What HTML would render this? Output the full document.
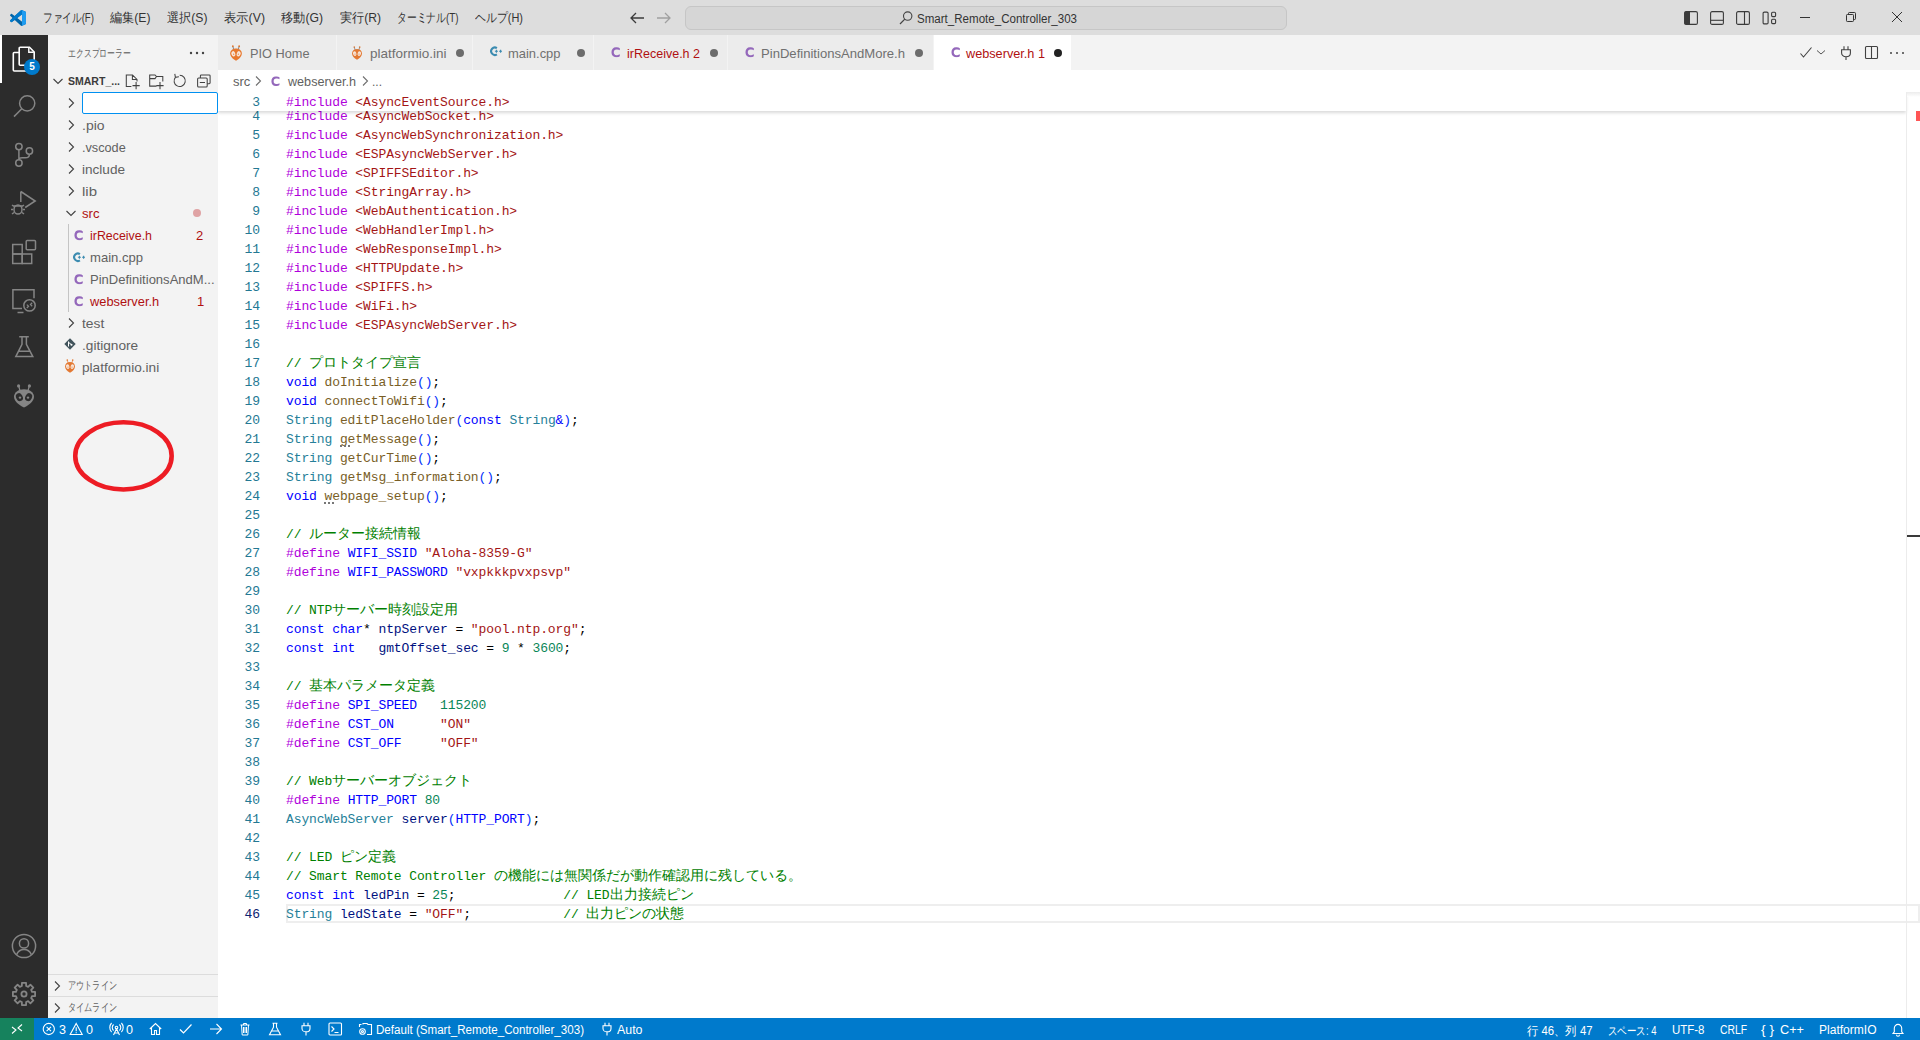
<!DOCTYPE html>
<html><head><meta charset="utf-8">
<style>
*{box-sizing:border-box;margin:0;padding:0}
html,body{width:1920px;height:1040px;overflow:hidden;background:#fff;font-family:"Liberation Sans",sans-serif;}
.abs{position:absolute}
#title{position:absolute;left:0;top:0;width:1920px;height:35px;background:#dddddd}
.menu{position:absolute;top:9px;font-size:13px;color:#333;white-space:nowrap}
#cc{position:absolute;left:685px;top:6px;width:602px;height:24px;border:1px solid #c6c6c6;border-radius:6px;background:#d6d6d6}
#act{position:absolute;left:0;top:35px;width:48px;height:983px;background:#2c2c2c}
#side{position:absolute;left:48px;top:35px;width:170px;height:983px;background:#f3f3f3}
#tabs{position:absolute;left:218px;top:35px;width:1702px;height:35px;background:#f3f3f3}
.tab{position:absolute;top:0;height:35px;background:#ececec;border-right:1px solid #f3f3f3;font-size:13px;color:#707070;white-space:nowrap}
.tab.active{background:#fff;color:#333}
.tab .lbl{position:absolute;top:11px}
.dot{position:absolute;top:14px;width:8px;height:8px;border-radius:50%;background:#6c6c6c}
#bc{position:absolute;left:218px;top:70px;width:1702px;height:22px;background:#fff;font-size:13px;color:#616161}
#editor{position:absolute;left:218px;top:92px;width:1702px;height:926px;background:#fff;overflow:hidden}
.ln{position:absolute;left:0;width:42px;text-align:right;font-family:"Liberation Mono",monospace;font-size:13px;line-height:19px;height:19px;color:#237893;padding-top:1px}
.ln.cur{color:#0b216f}
.cl{position:absolute;left:68px;white-space:pre;font-family:"Liberation Mono",monospace;font-size:13px;letter-spacing:-0.1px;line-height:19px;height:19px;color:#000;padding-top:1px}
.kw{color:#af00db}.str{color:#a31515}.cm{color:#008000}.cmj{color:#008000;letter-spacing:0;font-size:14px}.ty{color:#267f99}.fn{color:#795e26}.bl{color:#0000ff}.var{color:#001080}.num{color:#098658}.br{color:#0431fa}.op{color:#000}
#status{position:absolute;left:0;top:1018px;width:1920px;height:22px;background:#007acc;color:#fff;font-size:12px;white-space:nowrap}
.si{position:absolute;top:4.5px}
.tree{position:absolute;font-size:13px;color:#616161;white-space:nowrap;line-height:22px;height:22px;padding-top:1px}
</style></head><body>
<svg width="0" height="0" style="position:absolute">
<defs>
<symbol id="alien" viewBox="0 0 24 24">
 <path d="M12 5.2C6 5.2 2 8.6 2 12.8c0 4 4.4 8.4 10 10.7c5.6-2.3 10-6.7 10-10.7C22 8.6 18 5.2 12 5.2z"></path>
 <circle cx="6.6" cy="1.9" r="1.6"></circle><circle cx="17.4" cy="1.9" r="1.6"></circle>
 <path d="M6.9 2.5L7.8 6.2M17.1 2.5L16.2 6.2" stroke-width="1.3" stroke="currentColor"></path>
</symbol>
<symbol id="alieneyes" viewBox="0 0 24 24">
 <ellipse cx="7.4" cy="13.2" rx="3.3" ry="4.1" transform="rotate(-28 7.4 13.2)"></ellipse><ellipse cx="16.6" cy="13.2" rx="3.3" ry="4.1" transform="rotate(28 16.6 13.2)"></ellipse>
</symbol>
<symbol id="cicon" viewBox="0 0 9 10"><path d="M8.3 1.2C7.6.6 6.6.3 5.4.3H4.7C2 .3.4 2.2.4 5s1.6 4.7 4.3 4.7h.7c1.2 0 2.2-.3 2.9-.9V6.9c-.6.5-1.4.8-2.4.8H5c-1.5 0-2.4-1-2.4-2.7S3.5 2.3 5 2.3h.9c1 0 1.8.3 2.4.8z"></path></symbol>
<symbol id="chevr" viewBox="0 0 16 16"><path d="M6 3.5l4.5 4.5L6 12.5" fill="none" stroke="currentColor" stroke-width="1.1"></path></symbol>
<symbol id="chevd" viewBox="0 0 16 16"><path d="M3.5 6l4.5 4.5L12.5 6" fill="none" stroke="currentColor" stroke-width="1.1"></path></symbol>
<symbol id="cppicon" viewBox="0 0 12 11"><path d="M6.9 2.1A3.7 3.7 0 1 0 6.9 8.3" fill="none" stroke="currentColor" stroke-width="2.1"></path><path d="M4.9 5.2h3M6.4 3.7v3M9.1 5.2h3M10.6 3.7v3" stroke="currentColor" stroke-width="1.1"></path></symbol>
</defs></svg>
<div id="title">
  <div class="menu" style="left: 43px; display: inline-block; transform-origin: 0px 50%; transform: scaleX(0.7433);">ファイル(F)</div>
  <div class="menu" style="left: 110px; display: inline-block; transform-origin: 0px 50%; transform: scaleX(0.9344);">編集(E)</div>
  <div class="menu" style="left: 166.5px; display: inline-block; transform-origin: 0px 50%; transform: scaleX(0.9344);">選択(S)</div>
  <div class="menu" style="left: 223.5px; display: inline-block; transform-origin: 0px 50%; transform: scaleX(0.9459);">表示(V)</div>
  <div class="menu" style="left: 281px; display: inline-block; transform-origin: 0px 50%; transform: scaleX(0.9379);">移動(G)</div>
  <div class="menu" style="left: 340px; display: inline-block; transform-origin: 0px 50%; transform: scaleX(0.9308);">実行(R)</div>
  <div class="menu" style="left: 397px; display: inline-block; transform-origin: 0px 50%; transform: scaleX(0.7536);">ターミナル(T)</div>
  <div class="menu" style="left: 475px; display: inline-block; transform-origin: 0px 50%; transform: scaleX(0.8414);">ヘルプ(H)</div>
  <svg class="abs" style="left:10px;top:10px" width="16" height="16" viewBox="0 0 100 100"><path fill="#0065a9" fill-rule="evenodd" d="M70.9 99.3c1.6.6 3.4.6 5-.2l20.6-9.9c2.1-1 3.5-3.2 3.5-5.6V16.4c0-2.4-1.4-4.6-3.5-5.6L75.9.9c-2.1-1-4.5-.8-6.4.6-.3.2-.5.4-.7.6L29.4 38 12.2 25c-1.6-1.2-3.8-1.1-5.3.2l-5.5 5c-1.8 1.7-1.8 4.5 0 6.2L16.2 50 1.4 63.6c-1.8 1.7-1.8 4.5 0 6.2l5.5 5c1.5 1.4 3.7 1.5 5.3.2l17.2-13L68.8 97.9c.6.6 1.3 1.1 2.1 1.4zM75.9 27.3L45 50l30.9 22.7z"></path><path fill="#007acc" d="M96.5 10.8L75.9.9c-2.4-1.2-5.2-.7-7.1 1.2L1.4 63.6c-1.8 1.7-1.8 4.5 0 6.2l5.5 5c1.5 1.4 3.7 1.5 5.3.2L93.3 13.4c2.7-2.1 6.7-.1 6.7 3.3v-.2c0-2.4-1.4-4.6-3.5-5.7z"></path><path fill="#1f9cf0" d="M75.9 99.1c-2.4 1.2-5.2.7-7.1-1.2 2.3 2.3 6.3.7 6.3-2.6V4.6c0-3.3-4-4.9-6.3-2.6 1.9-1.9 4.7-2.4 7.1-1.2l20.6 9.9c2.2 1 3.5 3.2 3.5 5.6v67.2c0 2.4-1.4 4.6-3.5 5.6z"></path></svg>
  <svg class="abs" style="left:628px;top:10px" width="18" height="16" viewBox="0 0 18 16"><path d="M16 8H3M8 3L3 8l5 5" fill="none" stroke="#3b3b3b" stroke-width="1.3"></path></svg>
  <svg class="abs" style="left:655px;top:10px" width="18" height="16" viewBox="0 0 18 16"><path d="M2 8h13M10 3l5 5-5 5" fill="none" stroke="#a0a0a0" stroke-width="1.3"></path></svg>
  <svg class="abs" style="left:1684px;top:11px" width="14" height="14" viewBox="0 0 14 14"><rect x="0.6" y="0.6" width="12.8" height="12.8" rx="1.5" fill="none" stroke="#3b3b3b" stroke-width="1.1"></rect><rect x="0.6" y="0.6" width="5.4" height="12.8" fill="#3b3b3b"></rect></svg>
  <svg class="abs" style="left:1710px;top:11px" width="14" height="14" viewBox="0 0 14 14"><rect x="0.6" y="0.6" width="12.8" height="12.8" rx="1.5" fill="none" stroke="#3b3b3b" stroke-width="1.1"></rect><path d="M0.6 9.3h12.8" stroke="#3b3b3b" stroke-width="1.1"></path></svg>
  <svg class="abs" style="left:1736px;top:11px" width="14" height="14" viewBox="0 0 14 14"><rect x="0.6" y="0.6" width="12.8" height="12.8" rx="1.5" fill="none" stroke="#3b3b3b" stroke-width="1.1"></rect><path d="M8.5 0.6v12.8" stroke="#3b3b3b" stroke-width="1.1"></path></svg>
  <svg class="abs" style="left:1762px;top:11px" width="15" height="14" viewBox="0 0 15 14"><rect x="1.1" y="1.1" width="5" height="11.8" rx="1.2" fill="none" stroke="#3b3b3b" stroke-width="1.1"></rect><rect x="9.6" y="1.3" width="4" height="4.3" rx="1" fill="none" stroke="#3b3b3b" stroke-width="1.1"></rect><rect x="9.6" y="8.3" width="4" height="4.3" rx="1" fill="none" stroke="#3b3b3b" stroke-width="1.1"></rect></svg>
  <div class="abs" style="left:1800px;top:17px;width:10px;height:1px;background:#333"></div>
  <svg class="abs" style="left:1845px;top:11px" width="12" height="12" viewBox="0 0 12 12"><rect x="1.5" y="3.5" width="7" height="7" rx="0.8" fill="none" stroke="#333" stroke-width="1"></rect><path d="M3.5 3.5V2.3c0-.5.3-.8.8-.8h5.4c.5 0 .8.3.8.8v5.4c0 .5-.3.8-.8.8H8.5" fill="none" stroke="#333" stroke-width="1"></path></svg>
  <svg class="abs" style="left:1891px;top:11px" width="12" height="12" viewBox="0 0 12 12"><path d="M1 1l10 10M11 1L1 11" stroke="#333" stroke-width="1"></path></svg>
  <div id="cc"><svg class="abs" style="left:212px;top:3px" width="16" height="16" viewBox="0 0 16 16"><circle cx="9.7" cy="6.1" r="4.2" fill="none" stroke="#444" stroke-width="1.1"></circle><path d="M6.8 9.1L2 14" stroke="#444" stroke-width="1.2"></path></svg><div class="abs" style="left: 231px; top: 5px; font-size: 12px; color: rgb(51, 51, 51); display: inline-block; transform-origin: 0px 50%; transform: scaleX(0.9633);">Smart_Remote_Controller_303</div></div>
</div>
<div id="act">
 <div class="abs" style="left:0;top:0;width:2px;height:48px;background:#fff"></div>
 <svg class="abs" style="left:12px;top:11px" width="24" height="26" viewBox="0 0 24 26"><path d="M7.5 6.5H2.3c-.7 0-1 .4-1 1V24c0 .6.4 1 1 1H14c.6 0 1-.4 1-1v-4.5" fill="none" stroke="#fff" stroke-width="1.6"></path><path d="M8.2 1.3h9.3l4.7 4.7v12.3c0 .6-.4 1-1 1H8.2c-.6 0-1-.4-1-1V2.3c0-.6.4-1 1-1z" fill="none" stroke="#fff" stroke-width="1.6"></path><path d="M16.8 1.5v4.8h5" fill="none" stroke="#fff" stroke-width="1.4"></path></svg>
 <div class="abs" style="left:24px;top:24px;width:16px;height:16px;border-radius:50%;background:#007acc;color:#fff;font-size:10px;font-weight:bold;line-height:16px;text-align:center">5</div>
 <svg class="abs" style="left:0;top:48px" width="48" height="96" viewBox="0 0 48 96" fill="none" stroke="#858585" stroke-width="1.5">
   <circle cx="27.2" cy="20.3" r="7.6"></circle><path d="M21.8 25.8L14 33.6"></path>
   <circle cx="18.9" cy="63.6" r="3.2"></circle><circle cx="18.9" cy="80" r="3.2"></circle><circle cx="29.4" cy="68" r="3.2"></circle><path d="M18.9 66.8V76.8M29.4 71.2c0 2.5-1.5 3.6-4 3.6h-3.2c-2 0-3.3 1.2-3.3 2"></path>
 </svg>
 <svg class="abs" style="left:0;top:144px" width="48" height="96" viewBox="0 0 48 96" fill="none" stroke="#858585" stroke-width="1.5">
   <path d="M20.8 12.5v10.5M25.2 28.5L35.2 22 20.8 12.5"></path>
   <ellipse cx="18" cy="30.5" rx="4" ry="4.6"></ellipse><path d="M13.5 27h9M13 30.5h-2M23 30.5h2M12 26l2 1.5M24 26l-2 1.5M12 35l2-1.5M24 35l-2-1.5"></path>
   <rect x="12.7" y="65.5" width="9.5" height="9.5"></rect><rect x="12.7" y="75" width="9.5" height="9.5"></rect><rect x="22.2" y="75" width="9.5" height="9.5"></rect><rect x="26.2" y="61.4" width="9.3" height="9.3" rx="1"></rect>
 </svg>
 <svg class="abs" style="left:0;top:240px" width="48" height="96" viewBox="0 0 48 96" fill="none" stroke="#858585" stroke-width="1.5">
   <path d="M22 33.4h-9.1V14.8H34v8.5"></path><path d="M17.5 37.5h6"></path><circle cx="29.5" cy="30.4" r="5.7"></circle><path d="M26.8 29.6l1.8 1.7-1.8 1.7M32.2 27.8l-1.8 1.7 1.8 1.7" stroke-width="1.2"></path>
   <path d="M19.2 61.8h9.6M22 61.8v7.5L15.8 81.6h17L26.4 69.3v-7.5M18.3 76.3h12.4"></path>
 </svg>
 <svg class="abs" style="left:12px;top:349px;color:#858585" width="24" height="24" viewBox="0 0 24 24" fill="#858585"><use href="#alien"></use></svg>
 <svg class="abs" style="left:12px;top:349px" width="24" height="24" viewBox="0 0 24 24" fill="#2c2c2c"><use href="#alieneyes"></use><circle cx="8" cy="13.6" r="1.2" fill="#858585"></circle><circle cx="16" cy="13.6" r="1.2" fill="#858585"></circle></svg>
 <svg class="abs" style="left:0;top:887px" width="48" height="96" viewBox="0 0 48 96" fill="none" stroke="#858585" stroke-width="1.5">
   <circle cx="24" cy="24" r="11.6"></circle><circle cx="24" cy="21.4" r="4.6"></circle><path d="M16.6 32.6c1.5-3.3 4.3-5 7.4-5s5.9 1.7 7.4 5"></path>
 </svg>
 <svg class="abs" style="left:12px;top:946.5px" width="24" height="24" viewBox="0 0 24 24" fill="none" stroke="#858585" stroke-width="1.8">
   <path d="M20.02 9.85 L23.11 9.94 L23.11 14.06 L20.02 14.15 L19.19 16.15 L21.31 18.40 L18.40 21.31 L16.15 19.19 L14.15 20.02 L14.06 23.11 L9.94 23.11 L9.85 20.02 L7.85 19.19 L5.60 21.31 L2.69 18.40 L4.81 16.15 L3.98 14.15 L0.89 14.06 L0.89 9.94 L3.98 9.85 L4.81 7.85 L2.69 5.60 L5.60 2.69 L7.85 4.81 L9.85 3.98 L9.94 0.89 L14.06 0.89 L14.15 3.98 L16.15 4.81 L18.40 2.69 L21.31 5.60 L19.19 7.85Z" stroke-linejoin="round"></path><circle cx="12" cy="12" r="2.6"></circle>
 </svg>
</div>
<div id="side">
  <div class="abs" style="left: 20px; top: 11px; font-size: 11px; color: rgb(97, 97, 97); display: inline-block; transform-origin: 0px 50%; transform: scaleX(0.7159);" id="t_expl">エクスプローラー</div>
    <div class="abs" style="left: 20px; top: 40px; font-size: 11px; font-weight: bold; color: rgb(59, 59, 59); display: inline-block; transform-origin: 0px 50%; transform: scaleX(0.9558);" id="t_smart">SMART_...</div>
  <div class="abs" style="left:34px;top:57px;width:136px;height:22px;background:#fff;border:1px solid #0090f1;border-radius:2px"></div>
  <div class="tree" style="left: 34px; top: 79px; display: inline-block; transform-origin: 0px 50%; transform: scaleX(1.073);" id="tr_pio">.pio</div>
  <div class="tree" style="left: 34px; top: 101px; display: inline-block; transform-origin: 0px 50%; transform: scaleX(0.9752);" id="tr_vscode">.vscode</div>
  <div class="tree" style="left: 34px; top: 123px; display: inline-block; transform-origin: 0px 50%; transform: scaleX(1.0436);" id="tr_include">include</div>
  <div class="tree" style="left: 34px; top: 145px; display: inline-block; transform-origin: 0px 50%; transform: scaleX(1.1525);" id="tr_lib">lib</div>
  <div class="tree" style="left: 34px; top: 167px; color: rgb(176, 16, 17); display: inline-block; transform-origin: 0px 50%; transform: scaleX(1.009);" id="tr_src">src</div>
  <div class="abs" style="left:145px;top:174px;width:8px;height:8px;border-radius:50%;background:#dfa3a4"></div>
  <div class="abs" style="left:20px;top:189px;width:1px;height:88px;background:#c4c4c4"></div>
  <div class="tree" style="left: 42px; top: 189px; color: rgb(176, 16, 17); display: inline-block; transform-origin: 0px 50%; transform: scaleX(0.9534);" id="tr_ir">irReceive.h</div>
  <div class="tree" style="left:148px;top:189px;color:#b01011">2</div>
  <div class="tree" style="left: 42px; top: 211px; display: inline-block; transform-origin: 0px 50%; transform: scaleX(1.0047);" id="tr_main">main.cpp</div>
  <div class="tree" style="left: 42px; top: 233px; display: inline-block; transform-origin: 0px 50%; transform: scaleX(1.0018);" id="tr_pin">PinDefinitionsAndM...</div>
  <div class="tree" style="left: 42px; top: 255px; color: rgb(176, 16, 17); display: inline-block; transform-origin: 0px 50%; transform: scaleX(0.9872);" id="tr_web">webserver.h</div>
  <div class="tree" style="left:149px;top:255px;color:#b01011">1</div>
  <div class="tree" style="left: 34px; top: 277px; display: inline-block; transform-origin: 0px 50%; transform: scaleX(1.0635);" id="tr_test">test</div>
  <div class="tree" style="left: 34px; top: 299px; display: inline-block; transform-origin: 0px 50%; transform: scaleX(1.0508);" id="tr_git">.gitignore</div>
  <div class="tree" style="left: 34px; top: 321px; display: inline-block; transform-origin: 0px 50%; transform: scaleX(1.0474);" id="tr_pini">platformio.ini</div>
  <svg class="abs" style="left:24px;top:384px" width="104" height="74"><ellipse cx="51.45" cy="36.9" rx="48.2" ry="33.6" fill="none" stroke="#ed1c24" stroke-width="4.6"></ellipse></svg>

  <svg class="abs" style="left:2px;top:38px;color:#424242" width="16" height="16"><use href="#chevd"></use></svg>
  <svg class="abs" style="left:15px;top:60px;color:#424242" width="16" height="16"><use href="#chevr"></use></svg>
  <svg class="abs" style="left:15px;top:82px;color:#424242" width="16" height="16"><use href="#chevr"></use></svg>
  <svg class="abs" style="left:15px;top:104px;color:#424242" width="16" height="16"><use href="#chevr"></use></svg>
  <svg class="abs" style="left:15px;top:126px;color:#424242" width="16" height="16"><use href="#chevr"></use></svg>
  <svg class="abs" style="left:15px;top:148px;color:#424242" width="16" height="16"><use href="#chevr"></use></svg>
  <svg class="abs" style="left:15px;top:170px;color:#424242" width="16" height="16"><use href="#chevd"></use></svg>
  <svg class="abs" style="left:15px;top:280px;color:#424242" width="16" height="16"><use href="#chevr"></use></svg>
  <svg class="abs" style="left:25.5px;top:195px" width="9.5" height="10.6" viewBox="0 0 9 10" fill="#9468bb"><use href="#cicon"></use></svg>
  <svg class="abs" style="left:25.5px;top:239px" width="9.5" height="10.6" viewBox="0 0 9 10" fill="#9468bb"><use href="#cicon"></use></svg>
  <svg class="abs" style="left:25.5px;top:261px" width="9.5" height="10.6" viewBox="0 0 9 10" fill="#9468bb"><use href="#cicon"></use></svg>
  <svg class="abs" style="left:25.3px;top:216.8px;color:#3b8bb0" width="12" height="11"><use href="#cppicon"></use></svg>
  <svg class="abs" style="left:16px;top:303px" width="12" height="12" viewBox="0 0 12 12"><path d="M6 .3L11.7 6 6 11.7.3 6z" fill="#41535b"></path><path d="M4.5 3.5v5M4.8 4.5L7.3 6.6" stroke="#fff" stroke-width="1"></path><circle cx="7.5" cy="6.8" r="1" fill="#fff"></circle></svg>
  <svg class="abs" style="left:16px;top:324px;color:#e37933" width="12" height="14" viewBox="0 0 24 24" fill="#e37933" preserveAspectRatio="none"><use href="#alien"></use></svg>
  <svg class="abs" style="left:16px;top:324px" width="12" height="14" viewBox="0 0 24 24" preserveAspectRatio="none" fill="#f7e6da"><use href="#alieneyes"></use><circle cx="8" cy="13.8" r="1" fill="#e37933"></circle><circle cx="16" cy="13.8" r="1" fill="#e37933"></circle></svg>
  <svg class="abs" style="left:0;top:0" width="170" height="60" fill="none" stroke="#424242" stroke-width="1.05">
   <path d="M83.4 51.5H78.3V39.9h6.2l4.5 4.5V46.5M84.4 39.9v4.5h4.6M88.1 47v7.2M84.5 50.6h7.2"></path>
   <path d="M108.5 51.1h-6.8V39.9h5.3l1.5 1.6h6.3v4.9M101.7 43.6h5.3l1.5-2.1M112 47v7.2M108.4 50.6h7.2"></path>
   <path d="M127.4 42.3A5.6 5.6 0 1 0 131.7 40.3M126.8 38.8l.6 3.5 3.5-.6"></path>
   <rect x="149.6" y="42.9" width="9.6" height="9.1" rx="1"></rect><path d="M152.4 42.9v-2.1c0-.5.4-.9.9-.9h7.9c.5 0 .9.4.9.9v7c0 .5-.4.9-.9.9h-2M151.8 47.4h5.2"></path>
  </svg>
  <svg class="abs" style="left:140px;top:15px" width="20" height="6" fill="#424242"><circle cx="3" cy="3" r="1.2"></circle><circle cx="9" cy="3" r="1.2"></circle><circle cx="15" cy="3" r="1.2"></circle></svg>
  <svg class="abs" style="left:1px;top:943px;color:#424242" width="16" height="16"><use href="#chevr"></use></svg>
  <svg class="abs" style="left:1px;top:965px;color:#424242" width="16" height="16"><use href="#chevr"></use></svg>
  <div class="abs" style="left:0;top:939px;width:170px;height:1px;background:#dcdcdc"></div>
  <div class="abs" style="left: 20px; top: 943px; font-size: 11px; color: rgb(97, 97, 97); display: inline-block; transform-origin: 0px 50%; transform: scaleX(0.7424);" id="t_outline">アウトライン</div>
  <div class="abs" style="left:0;top:961px;width:170px;height:1px;background:#dcdcdc"></div>
  <div class="abs" style="left: 20px; top: 965px; font-size: 11px; color: rgb(97, 97, 97); display: inline-block; transform-origin: 0px 50%; transform: scaleX(0.7424);" id="t_timeline">タイムライン</div>
</div>
<div id="tabs">
  <div class="tab" style="left:0;width:119px"><svg class="abs" style="left:11px;top:10px" width="14" height="16" viewBox="0 0 24 24" preserveAspectRatio="none" fill="#e8792f"><use href="#alien"></use></svg><svg class="abs" style="left:11px;top:10px" width="14" height="16" viewBox="0 0 24 24" preserveAspectRatio="none" fill="#f7e6da"><use href="#alieneyes"></use><circle cx="8" cy="13.8" r="1" fill="#e8792f"></circle><circle cx="16" cy="13.8" r="1" fill="#e8792f"></circle></svg><span class="lbl" style="left: 32px; display: inline-block; transform-origin: 0px 50%; transform: scaleX(0.9804);">PIO Home</span></div>
  <div class="tab" style="left:119px;width:136px"><svg class="abs" style="left:14px;top:11px" width="12" height="14" viewBox="0 0 24 24" preserveAspectRatio="none" fill="#e37933"><use href="#alien"></use></svg><svg class="abs" style="left:14px;top:11px" width="12" height="14" viewBox="0 0 24 24" preserveAspectRatio="none" fill="#f7e6da"><use href="#alieneyes"></use><circle cx="8" cy="13.8" r="1" fill="#e37933"></circle><circle cx="16" cy="13.8" r="1" fill="#e37933"></circle></svg><span class="lbl" style="left: 33px; display: inline-block; transform-origin: 0px 50%; transform: scaleX(1.0379);">platformio.ini</span><span class="dot" style="left:119px"></span></div>
  <div class="tab" style="left:255px;width:121px"><svg class="abs" style="left:17px;top:10.8px;color:#3b8bb0" width="12" height="11"><use href="#cppicon"></use></svg><span class="lbl" style="left: 34.5px; display: inline-block; transform-origin: 0px 50%; transform: scaleX(0.9953);">main.cpp</span><span class="dot" style="left:104px"></span></div>
  <div class="tab" style="left:376px;width:134px"><svg class="abs" style="left:17.3px;top:12.3px" width="9.6" height="10.6" viewBox="0 0 9 10" fill="#9468bb"><use href="#cicon"></use></svg><span class="lbl" style="left: 33px; color: rgb(176, 16, 17); display: inline-block; transform-origin: 0px 50%; transform: scaleX(0.9621);">irReceive.h 2</span><span class="dot" style="left:116px"></span></div>
  <div class="tab" style="left:510px;width:206px"><svg class="abs" style="left:17.3px;top:12.3px" width="9.6" height="10.6" viewBox="0 0 9 10" fill="#9468bb"><use href="#cicon"></use></svg><span class="lbl" style="left: 33px; display: inline-block; transform-origin: 0px 50%; transform: scaleX(1.0064);">PinDefinitionsAndMore.h</span><span class="dot" style="left:186.5px"></span></div>

  <svg class="abs" style="left:1580px;top:10px" width="16" height="16" viewBox="0 0 16 16" fill="none" stroke="#424242" stroke-width="1.1"><path d="M2.5 8.5L5.5 12 13.5 2.5"></path></svg>
  <svg class="abs" style="left:1598px;top:13px" width="10" height="8" viewBox="0 0 10 8" fill="none" stroke="#424242" stroke-width="0.9"><path d="M1 2.5L5 6 9 2.5"></path></svg>
  <svg class="abs" style="left:1620px;top:10px" width="16" height="16" viewBox="0 0 16 16" fill="none" stroke="#424242" stroke-width="1.1"><path d="M6 1.2v3.5M10 1.2v3.5M3.6 4.7h8.8v3.2c0 2.2-1.8 3.8-4.4 3.8S3.6 10.1 3.6 7.9zM8 11.7v3.4"></path></svg>
  <svg class="abs" style="left:1646px;top:10px" width="16" height="16" viewBox="0 0 16 16" fill="none" stroke="#424242" stroke-width="1.1"><rect x="1.5" y="1.5" width="12" height="12" rx="1"></rect><path d="M7.5 1.5v12"></path></svg>
  <svg class="abs" style="left:1669px;top:10px" width="20" height="16" viewBox="0 0 20 16" fill="#424242"><circle cx="4" cy="8" r="1"></circle><circle cx="10" cy="8" r="1"></circle><circle cx="16" cy="8" r="1"></circle></svg>
  <div class="tab active" style="left:716px;width:138px"><svg class="abs" style="left:17.3px;top:12.3px" width="9.6" height="10.6" viewBox="0 0 9 10" fill="#9468bb"><use href="#cicon"></use></svg><span class="lbl" style="left: 31.5px; color: rgb(176, 16, 17); display: inline-block; transform-origin: 0px 50%; transform: scaleX(0.9761);">webserver.h 1</span><span class="dot" style="left:120px;background:#222"></span></div>
</div>
<div id="bc"><span class="abs" style="left:15px;top:4px">src</span>
 <svg class="abs" style="left:32px;top:3px;color:#6f6f6f" width="16" height="16"><use href="#chevr"></use></svg>
 <svg class="abs" style="left:53.4px;top:5.6px" width="9.2" height="10.4" viewBox="0 0 9 10" fill="#9468bb"><use href="#cicon"></use></svg>
 <span class="abs" style="left: 70.3px; top: 4px; display: inline-block; transform-origin: 0px 50%; transform: scaleX(0.9701);">webserver.h</span>
 <svg class="abs" style="left:138.5px;top:3px;color:#6f6f6f" width="16" height="16"><use href="#chevr"></use></svg>
 <span class="abs" style="left: 154px; top: 4px; display: inline-block; transform-origin: 0px 50%; transform: scaleX(0.9222);">...</span></div>
<div id="editor">
<div class="abs" style="left:68px;top:812px;width:1634px;height:19px;border:2px solid #eeeeee"></div>
<div class="ln" style="top:14px">4</div><div class="cl" style="top:14px"><span class="kw">#include</span><span class="op"> </span><span class="str">&lt;AsyncWebSocket.h&gt;</span></div>
<div class="ln" style="top:33px">5</div><div class="cl" style="top:33px"><span class="kw">#include</span><span class="op"> </span><span class="str">&lt;AsyncWebSynchronization.h&gt;</span></div>
<div class="ln" style="top:52px">6</div><div class="cl" style="top:52px"><span class="kw">#include</span><span class="op"> </span><span class="str">&lt;ESPAsyncWebServer.h&gt;</span></div>
<div class="ln" style="top:71px">7</div><div class="cl" style="top:71px"><span class="kw">#include</span><span class="op"> </span><span class="str">&lt;SPIFFSEditor.h&gt;</span></div>
<div class="ln" style="top:90px">8</div><div class="cl" style="top:90px"><span class="kw">#include</span><span class="op"> </span><span class="str">&lt;StringArray.h&gt;</span></div>
<div class="ln" style="top:109px">9</div><div class="cl" style="top:109px"><span class="kw">#include</span><span class="op"> </span><span class="str">&lt;WebAuthentication.h&gt;</span></div>
<div class="ln" style="top:128px">10</div><div class="cl" style="top:128px"><span class="kw">#include</span><span class="op"> </span><span class="str">&lt;WebHandlerImpl.h&gt;</span></div>
<div class="ln" style="top:147px">11</div><div class="cl" style="top:147px"><span class="kw">#include</span><span class="op"> </span><span class="str">&lt;WebResponseImpl.h&gt;</span></div>
<div class="ln" style="top:166px">12</div><div class="cl" style="top:166px"><span class="kw">#include</span><span class="op"> </span><span class="str">&lt;HTTPUpdate.h&gt;</span></div>
<div class="ln" style="top:185px">13</div><div class="cl" style="top:185px"><span class="kw">#include</span><span class="op"> </span><span class="str">&lt;SPIFFS.h&gt;</span></div>
<div class="ln" style="top:204px">14</div><div class="cl" style="top:204px"><span class="kw">#include</span><span class="op"> </span><span class="str">&lt;WiFi.h&gt;</span></div>
<div class="ln" style="top:223px">15</div><div class="cl" style="top:223px"><span class="kw">#include</span><span class="op"> </span><span class="str">&lt;ESPAsyncWebServer.h&gt;</span></div>
<div class="ln" style="top:242px">16</div><div class="cl" style="top:242px"></div>
<div class="ln" style="top:261px">17</div><div class="cl" style="top:261px"><span class="cm">// </span><span class="cmj">プロトタイプ宣言</span></div>
<div class="ln" style="top:280px">18</div><div class="cl" style="top:280px"><span class="bl">void</span><span class="op"> </span><span class="fn">doInitialize</span><span class="br">()</span><span class="op">;</span></div>
<div class="ln" style="top:299px">19</div><div class="cl" style="top:299px"><span class="bl">void</span><span class="op"> </span><span class="fn">connectToWifi</span><span class="br">()</span><span class="op">;</span></div>
<div class="ln" style="top:318px">20</div><div class="cl" style="top:318px"><span class="ty">String</span><span class="op"> </span><span class="fn">editPlaceHolder</span><span class="br">(</span><span class="bl">const</span><span class="op"> </span><span class="ty">String</span><span class="bl">&amp;</span><span class="br">)</span><span class="op">;</span></div>
<div class="ln" style="top:337px">21</div><div class="cl" style="top:337px"><span class="ty">String</span><span class="op"> </span><span class="fn">getMessage</span><span class="br">()</span><span class="op">;</span></div>
<div class="ln" style="top:356px">22</div><div class="cl" style="top:356px"><span class="ty">String</span><span class="op"> </span><span class="fn">getCurTime</span><span class="br">()</span><span class="op">;</span></div>
<div class="ln" style="top:375px">23</div><div class="cl" style="top:375px"><span class="ty">String</span><span class="op"> </span><span class="fn">getMsg_information</span><span class="br">()</span><span class="op">;</span></div>
<div class="ln" style="top:394px">24</div><div class="cl" style="top:394px"><span class="bl">void</span><span class="op"> </span><span class="fn">webpage_setup</span><span class="br">()</span><span class="op">;</span></div>
<div class="ln" style="top:413px">25</div><div class="cl" style="top:413px"></div>
<div class="ln" style="top:432px">26</div><div class="cl" style="top:432px"><span class="cm">// </span><span class="cmj">ルーター接続情報</span></div>
<div class="ln" style="top:451px">27</div><div class="cl" style="top:451px"><span class="kw">#define</span><span class="op"> </span><span class="bl">WIFI_SSID</span><span class="op"> </span><span class="str">"Aloha-8359-G"</span></div>
<div class="ln" style="top:470px">28</div><div class="cl" style="top:470px"><span class="kw">#define</span><span class="op"> </span><span class="bl">WIFI_PASSWORD</span><span class="op"> </span><span class="str">"vxpkkkpvxpsvp"</span></div>
<div class="ln" style="top:489px">29</div><div class="cl" style="top:489px"></div>
<div class="ln" style="top:508px">30</div><div class="cl" style="top:508px"><span class="cm">// NTP</span><span class="cmj">サーバー時刻設定用</span></div>
<div class="ln" style="top:527px">31</div><div class="cl" style="top:527px"><span class="bl">const</span><span class="op"> </span><span class="bl">char</span><span class="op">* </span><span class="var">ntpServer</span><span class="op"> = </span><span class="str">"pool.ntp.org"</span><span class="op">;</span></div>
<div class="ln" style="top:546px">32</div><div class="cl" style="top:546px"><span class="bl">const</span><span class="op"> </span><span class="bl">int</span><span class="op">   </span><span class="var">gmtOffset_sec</span><span class="op"> = </span><span class="num">9</span><span class="op"> * </span><span class="num">3600</span><span class="op">;</span></div>
<div class="ln" style="top:565px">33</div><div class="cl" style="top:565px"></div>
<div class="ln" style="top:584px">34</div><div class="cl" style="top:584px"><span class="cm">// </span><span class="cmj">基本パラメータ定義</span></div>
<div class="ln" style="top:603px">35</div><div class="cl" style="top:603px"><span class="kw">#define</span><span class="op"> </span><span class="bl">SPI_SPEED</span><span class="op">   </span><span class="num">115200</span></div>
<div class="ln" style="top:622px">36</div><div class="cl" style="top:622px"><span class="kw">#define</span><span class="op"> </span><span class="bl">CST_ON</span><span class="op">      </span><span class="str">"ON"</span></div>
<div class="ln" style="top:641px">37</div><div class="cl" style="top:641px"><span class="kw">#define</span><span class="op"> </span><span class="bl">CST_OFF</span><span class="op">     </span><span class="str">"OFF"</span></div>
<div class="ln" style="top:660px">38</div><div class="cl" style="top:660px"></div>
<div class="ln" style="top:679px">39</div><div class="cl" style="top:679px"><span class="cm">// Web</span><span class="cmj">サーバーオブジェクト</span></div>
<div class="ln" style="top:698px">40</div><div class="cl" style="top:698px"><span class="kw">#define</span><span class="op"> </span><span class="bl">HTTP_PORT</span><span class="op"> </span><span class="num">80</span></div>
<div class="ln" style="top:717px">41</div><div class="cl" style="top:717px"><span class="ty">AsyncWebServer</span><span class="op"> </span><span class="var">server</span><span class="br">(</span><span class="bl">HTTP_PORT</span><span class="br">)</span><span class="op">;</span></div>
<div class="ln" style="top:736px">42</div><div class="cl" style="top:736px"></div>
<div class="ln" style="top:755px">43</div><div class="cl" style="top:755px"><span class="cm">// LED </span><span class="cmj">ピン定義</span></div>
<div class="ln" style="top:774px">44</div><div class="cl" style="top:774px"><span class="cm">// Smart Remote Controller </span><span class="cmj">の機能には無関係だが動作確認用に残している。</span></div>
<div class="ln" style="top:793px">45</div><div class="cl" style="top:793px"><span class="bl">const</span><span class="op"> </span><span class="bl">int</span><span class="op"> </span><span class="var">ledPin</span><span class="op"> = </span><span class="num">25</span><span class="op">;              </span><span class="cm">// LED</span><span class="cmj">出力接続ピン</span></div>
<div class="ln cur" style="top:812px">46</div><div class="cl" style="top:812px"><span class="ty">String</span><span class="op"> </span><span class="var">ledState</span><span class="op"> = </span><span class="str">"OFF"</span><span class="op">;            </span><span class="cm">// </span><span class="cmj">出力ピンの状態</span></div>
<div class="abs" style="left:106px;top:410px;width:2px;height:2px;background:#777"></div><div class="abs" style="left:110px;top:410px;width:2px;height:2px;background:#777"></div><div class="abs" style="left:114px;top:410px;width:2px;height:2px;background:#777"></div><div class="abs" style="left:122px;top:353px;width:2px;height:2px;background:#777"></div><div class="abs" style="left:126px;top:353px;width:2px;height:2px;background:#777"></div><div class="abs" style="left:130px;top:353px;width:2px;height:2px;background:#777"></div>
<div class="abs" style="left:0;top:0;width:1688px;height:19px;background:#fff;box-shadow:0 2px 3px rgba(0,0,0,0.15)">
<div class="ln" style="top:0">3</div><div class="cl" style="top:0"><span class="kw">#include</span><span class="op"> </span><span class="str">&lt;AsyncEventSource.h&gt;</span></div>
</div>
<div class="abs" style="left:1688px;top:0;width:1px;height:926px;background:#ececec"></div>
<div class="abs" style="left:1689px;top:0;width:13px;height:5px;background:linear-gradient(#ececec,#fff)"></div>
<div class="abs" style="left:1698px;top:19px;width:4px;height:10px;background:#ff5555"></div>
<div class="abs" style="left:1689px;top:443px;width:13px;height:2px;background:#3a3a3a"></div>
</div>
<div id="status">
 <div class="abs" style="left:0;top:0;width:34px;height:22px;background:#16825d"></div>
 <svg class="abs" style="left:11px;top:5px" width="12" height="12" viewBox="0 0 12 12" fill="none" stroke="#fff" stroke-width="1.1"><path d="M1 10.5l4-3.5-4-3M11 1.5L7 5l4 3"></path></svg>
 <svg class="abs" style="left:42px;top:4px" width="14" height="14" viewBox="0 0 14 14" fill="none" stroke="#fff" stroke-width="1.1"><circle cx="6.8" cy="7" r="5.6"></circle><path d="M4.6 4.8l4.4 4.4M9 4.8L4.6 9.2"></path></svg>
 <span class="si" style="left: 59px; display: inline-block; transform-origin: 0px 50%; transform: scaleX(1.0467);">3</span>
 <svg class="abs" style="left:69px;top:4px" width="15" height="14" viewBox="0 0 15 14" fill="none" stroke="#fff" stroke-width="1.1"><path d="M7.2 1.5L13.2 12.5H1.2z"></path><path d="M7.2 5.2v4M7.2 10.3v1"></path></svg>
 <span class="si" style="left: 86px; display: inline-block; transform-origin: 0px 50%; transform: scaleX(1.0467);">0</span>
 <svg class="abs" style="left:109px;top:4px" width="15" height="14" viewBox="0 0 15 14" fill="none" stroke="#fff" stroke-width="1.1"><circle cx="7.5" cy="5.5" r="1.3"></circle><path d="M7.5 6.8L4.5 13M7.5 6.8L10.5 13M5.3 11h4.4M4.6 2.5a4 4 0 0 0 0 6M10.4 2.5a4 4 0 0 1 0 6M2.6 1a6.5 6.5 0 0 0 0 9M12.4 1a6.5 6.5 0 0 1 0 9"></path></svg>
 <span class="si" style="left: 126px; display: inline-block; transform-origin: 0px 50%; transform: scaleX(1.0467);">0</span>
 <svg class="abs" style="left:148px;top:4px" width="15" height="14" viewBox="0 0 15 14" fill="none" stroke="#fff" stroke-width="1.1"><path d="M1.8 7L7.5 1.6 13.2 7M3.5 5.5v7h3v-4h2v4h3v-7"></path></svg>
 <svg class="abs" style="left:179px;top:4px" width="14" height="14" viewBox="0 0 14 14" fill="none" stroke="#fff" stroke-width="1.2"><path d="M1 7.5L4.5 11 12.5 2.5"></path></svg>
 <svg class="abs" style="left:209px;top:4px" width="14" height="14" viewBox="0 0 14 14" fill="none" stroke="#fff" stroke-width="1.1"><path d="M1 7h11.5M7.5 2l5 5-5 5"></path></svg>
 <svg class="abs" style="left:239px;top:4px" width="12" height="14" viewBox="0 0 12 14" fill="none" stroke="#fff" stroke-width="1"><path d="M1.5 3h9M4.5 3V1.5h3V3M2.5 3l.7 10h5.6l.7-10M4.5 5v6M6 5v6M7.5 5v6"></path></svg>
 <svg class="abs" style="left:268px;top:4px" width="14" height="14" viewBox="0 0 14 14" fill="none" stroke="#fff" stroke-width="1.1"><path d="M4.5 1.2h5M5.5 1.2v4L1.5 12.8h11L8.5 5.2v-4M3.4 9h7.2"></path></svg>
 <svg class="abs" style="left:300px;top:4px" width="12" height="14" viewBox="0 0 12 14" fill="none" stroke="#fff" stroke-width="1.1"><path d="M4 .8v3M8 .8v3M2 3.8h8v2.6c0 2-1.8 3.4-4 3.4s-4-1.4-4-3.4zM6 9.8v3.6"></path></svg>
 <svg class="abs" style="left:328px;top:4px" width="15" height="14" viewBox="0 0 15 14" fill="none" stroke="#fff" stroke-width="1.1"><rect x="1" y="1" width="12.5" height="12" rx="1"></rect><path d="M3.5 4.5L6 7 3.5 9.5M6.5 10.5h4"></path></svg>
 <svg class="abs" style="left:358px;top:4px" width="15" height="14" viewBox="0 0 15 14" fill="none" stroke="#fff" stroke-width="1.1"><path d="M5 2.5V1.5h4l1 1h3.5v10H9M1.5 5V2.5h2"></path><circle cx="4.5" cy="9.5" r="2.8"></circle><circle cx="4.5" cy="9.5" r="1"></circle></svg>
 <span class="si" style="left: 376px; display: inline-block; transform-origin: 0px 50%; transform: scaleX(0.9655);">Default (Smart_Remote_Controller_303)</span>
 <svg class="abs" style="left:601px;top:4px" width="12" height="14" viewBox="0 0 12 14" fill="none" stroke="#fff" stroke-width="1.1"><path d="M4 .8v3M8 .8v3M2 3.8h8v2.6c0 2-1.8 3.4-4 3.4s-4-1.4-4-3.4zM6 9.8v3.6"></path></svg>
 <span class="si" style="left: 617px; display: inline-block; transform-origin: 0px 50%; transform: scaleX(1.0329);">Auto</span>
 <span class="si" style="left: 1527px; display: inline-block; transform-origin: 0px 50%; transform: scaleX(0.9441);">行 46、列 47</span>
 <span class="si" style="left: 1608px; display: inline-block; transform-origin: 0px 50%; transform: scaleX(0.7906);">スペース: 4</span>
 <span class="si" style="left: 1672px; display: inline-block; transform-origin: 0px 50%; transform: scaleX(0.9559);">UTF-8</span>
 <span class="si" style="left: 1719.5px; display: inline-block; transform-origin: 0px 50%; transform: scaleX(0.8614);">CRLF</span>
 <span class="si" style="left: 1761px; display: inline-block; transform-origin: 0px 50%; transform: scaleX(1.1444);">{ }</span>
 <span class="si" style="left: 1780px; display: inline-block; transform-origin: 0px 50%; transform: scaleX(1.0579);">C++</span>
 <span class="si" style="left: 1818.5px; display: inline-block; transform-origin: 0px 50%; transform: scaleX(1.0025);">PlatformIO</span>
 <svg class="abs" style="left:1890px;top:4px" width="16" height="15" viewBox="0 0 16 15" fill="none" stroke="#fff" stroke-width="1.1"><path d="M3 11.5h10l-1.3-1.8V6.2A3.7 3.7 0 0 0 8 2.4a3.7 3.7 0 0 0-3.7 3.8v3.5zM6.5 12.8a1.5 1.5 0 0 0 3 0"></path></svg>
</div>

</body></html>
